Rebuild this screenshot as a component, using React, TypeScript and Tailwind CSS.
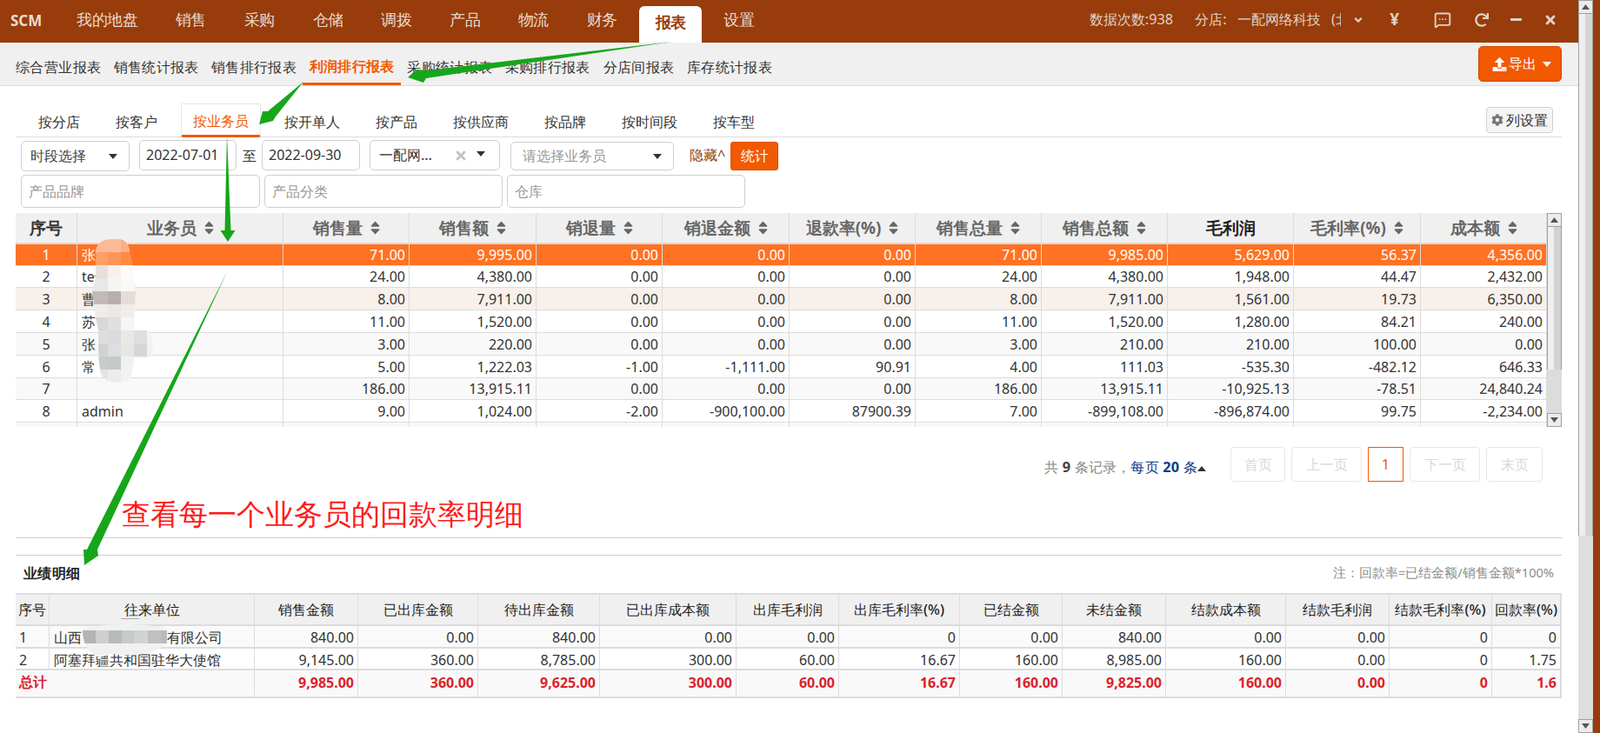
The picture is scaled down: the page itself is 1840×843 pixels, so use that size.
import React from "react";
import { FaAngleDown, FaCog, FaMinus, FaRedo, FaTimes, FaUpload } from "react-icons/fa";
import { MessageSquareMore } from "lucide-react";

const navItems = ["我的地盘", "销售", "采购", "仓储", "调拨", "产品", "物流", "财务", "报表", "设置"];
const subItems = ["综合营业报表", "销售统计报表", "销售排行报表", "利润排行报表", "采购统计报表", "采购排行报表", "分店间报表", "库存统计报表"];
const tabs = ["按分店", "按客户", "按业务员", "按开单人", "按产品", "按供应商", "按品牌", "按时间段", "按车型"];

const mainHead = ["销售量", "销售额", "销退量", "销退金额", "退款率(%)", "销售总量", "销售总额", "毛利润", "毛利率(%)", "成本额"];
const mainWidths = ["w-[145px]", "w-[146px]", "w-[145px]", "w-[146px]", "w-[145px]", "w-[145px]", "w-[145px]", "w-[145px]", "w-[146px]", "w-[145px]"];
const mainRows: { h: string; bg: string; name: string; v: string[] }[] = [
  { h: "h-[25px]", bg: "bg-[#ff7223] text-white", name: "张", v: ["71.00", "9,995.00", "0.00", "0.00", "0.00", "71.00", "9,985.00", "5,629.00", "56.37", "4,356.00"] },
  { h: "h-[25px]", bg: "bg-white", name: "test", v: ["24.00", "4,380.00", "0.00", "0.00", "0.00", "24.00", "4,380.00", "1,948.00", "44.47", "2,432.00"] },
  { h: "h-[26px]", bg: "bg-[#f7f0eb]", name: "曹", v: ["8.00", "7,911.00", "0.00", "0.00", "0.00", "8.00", "7,911.00", "1,561.00", "19.73", "6,350.00"] },
  { h: "h-[26px]", bg: "bg-white", name: "苏", v: ["11.00", "1,520.00", "0.00", "0.00", "0.00", "11.00", "1,520.00", "1,280.00", "84.21", "240.00"] },
  { h: "h-[26px]", bg: "bg-[#f9f9f9]", name: "张", v: ["3.00", "220.00", "0.00", "0.00", "0.00", "3.00", "210.00", "210.00", "100.00", "0.00"] },
  { h: "h-[26px]", bg: "bg-white", name: "常", v: ["5.00", "1,222.03", "-1.00", "-1,111.00", "90.91", "4.00", "111.03", "-535.30", "-482.12", "646.33"] },
  { h: "h-[25px]", bg: "bg-[#f9f9f9]", name: "", v: ["186.00", "13,915.11", "0.00", "0.00", "0.00", "186.00", "13,915.11", "-10,925.13", "-78.51", "24,840.24"] },
  { h: "h-[26px]", bg: "bg-white", name: "admin", v: ["9.00", "1,024.00", "-2.00", "-900,100.00", "87900.39", "7.00", "-899,108.00", "-896,874.00", "99.75", "-2,234.00"] },
  { h: "h-[26px]", bg: "bg-[#f9f9f9]", name: "", v: ["", "", "", "", "", "", "", "", "", ""] },
];

const subHead = ["销售金额", "已出库金额", "待出库金额", "已出库成本额", "出库毛利润", "出库毛利率(%)", "已结金额", "未结金额", "结款成本额", "结款毛利润", "结款毛利率(%)", "回款率(%)"];
const subWidths = ["w-[119px]", "w-[138px]", "w-[140px]", "w-[157px]", "w-[118px]", "w-[139px]", "w-[118px]", "w-[119px]", "w-[138px]", "w-[119px]", "w-[118px]", "w-[79px]"];
const subRow1 = ["840.00", "0.00", "840.00", "0.00", "0.00", "0", "0.00", "840.00", "0.00", "0.00", "0", "0"];
const subRow2 = ["9,145.00", "360.00", "8,785.00", "300.00", "60.00", "16.67", "160.00", "8,985.00", "160.00", "0.00", "0", "1.75"];
const subTotal = ["9,985.00", "360.00", "9,625.00", "300.00", "60.00", "16.67", "160.00", "9,825.00", "160.00", "0.00", "0", "1.6"];

const mosaicA: [number, number, number, string][] = [
  [110, 275, 14, "#fbb994"], [124, 275, 15, "#fcbb98"], [139, 275, 14, "#f9b087"],
  [106, 290, 18, "#fe9f66"], [124, 290, 15, "#ff9558"], [139, 290, 14, "#ff8b45"],
  [106, 305, 18, "#e8dedb"], [124, 305, 15, "#faf0eb"], [139, 305, 15, "#fdfbf9"],
  [106, 320, 18, "#e8e8e8"], [124, 320, 15, "#f7f5f3"], [139, 320, 15, "#f9f9f9"],
  [106, 335, 18, "#c2bab7"], [124, 335, 15, "#b5b0ae"], [139, 335, 17, "#e6dcd9"],
  [106, 350, 18, "#f1ecea"], [124, 350, 15, "#eae7e5"], [139, 350, 17, "#f2eded"],
  [106, 365, 18, "#d8d8d9"], [124, 365, 15, "#e0dfdf"], [139, 365, 17, "#f6f6f8"],
  [106, 380, 18, "#dedede"], [124, 380, 15, "#d9dcdf"], [139, 380, 15, "#e8e8e6"], [154, 380, 15, "#dddee0"], [169, 380, 8, "#f3f3f3"],
  [106, 395, 18, "#d0d2d3"], [124, 395, 15, "#dcdee0"], [139, 395, 15, "#e6e6e4"], [154, 395, 15, "#d5d6d8"], [169, 395, 8, "#f1f1f1"],
  [106, 410, 18, "#c8cbcb"], [124, 410, 15, "#c4c8c8"], [139, 410, 15, "#f0f1f3"], [154, 410, 15, "#f6f6f6"],
  [106, 425, 18, "#e4e4e4"], [124, 425, 15, "#ececec"], [139, 425, 15, "#f2f2f2"],
];
const mosaicB: [number, string][] = [
  [95, "#b3b3b3"], [110, "#cfcfcf"], [125, "#b9b9b9"], [140, "#c5caca"], [155, "#d2d2d2"], [170, "#c0c0c0"], [185, "#b9b9b9"],
];

const SortIcon = () => (
  <svg viewBox="0 0 11 16" className="h-[16px] w-[11px] shrink-0" fill="#666">
    <path d="M5.5 0.5 L10.2 5.6 Q10.6 6.6 9.6 6.8 L1.4 6.8 Q0.4 6.6 0.8 5.6 Z" />
    <path d="M5.5 15.5 L10.2 10.4 Q10.6 9.4 9.6 9.2 L1.4 9.2 Q0.4 9.4 0.8 10.4 Z" />
  </svg>
);

const Caret = ({ c = "#333" }: { c?: string }) => (
  <svg viewBox="0 0 10 6" className="h-[6px] w-[10px] shrink-0" fill={c}>
    <path d="M0 0 H10 L5 6 Z" />
  </svg>
);

const ScrollBtn = ({ up }: { up?: boolean }) => (
  <div className="flex h-[16px] w-full shrink-0 items-center justify-center border border-[#a0a0a0] bg-[#ececec]">
    <svg viewBox="0 0 9 6" className="h-[6px] w-[9px]" fill="#555">
      <path d={up ? "M4.5 0 L9 6 H0 Z" : "M0 0 H9 L4.5 6 Z"} />
    </svg>
  </div>
);

export default function App() {
  return (
    <div className="relative flex h-[843px] w-[1840px] overflow-hidden bg-white text-[16px] text-[#333] [font-family:'Liberation_Sans','Noto_Sans_CJK_SC',sans-serif]">
      <div className="flex w-[1815px] shrink-0 flex-col">
        {/* top bar */}
        <header className="flex h-[49px] shrink-0 items-end bg-[#973c0a] text-[#eadbd0]">
          <div className="flex h-[44px] w-[66px] items-center pb-[6px] pl-[12px] text-[17px] font-bold text-[#eadbd0]">SCM</div>
          <nav className="flex items-end pl-[0.3px]">
            {navItems.map((n) =>
              n === "报表" ? (
                <div key={n} className="mx-[3.5px] flex h-[42px] w-[72px] items-center justify-center rounded-t-[6px] bg-white pb-[6px] text-[17.5px] font-bold tracking-[-0.5px] text-[#973c0a]">
                  {n}
                </div>
              ) : (
                <div key={n} className="flex h-[42px] items-center px-[21.9px] pb-[12px] text-[17.5px] tracking-[-0.5px]">
                  {n}
                </div>
              )
            )}
          </nav>
          <div className="ml-auto flex h-full items-center pb-[4px]">
            <span className="text-[16.3px] text-[#dfd2c8]">数据次数:938</span>
            <span className="ml-[25px] w-[168px] overflow-hidden whitespace-nowrap text-[16.3px] text-[#dfd2c8] [word-spacing:8px]">
              分店: 一配网络科技 (北京)有限公司
            </span>
            <FaAngleDown className="ml-[13px] text-[14px] text-[#dfd2c8]" />
            <span className="ml-[29px] text-[19px] font-bold leading-none text-[#dfd2c8]">¥</span>
            <MessageSquareMore className="ml-[40px] h-[20px] w-[20px] text-[#dfd2c8]" strokeWidth={2.2} />
            <FaRedo className="ml-[27px] h-[16px] w-[16px] text-[#dfd2c8]" />
            <FaMinus className="ml-[24px] h-[15px] w-[15px] text-[#dfd2c8]" />
            <FaTimes className="ml-[25px] mr-[25px] h-[16px] w-[14px] text-[#dfd2c8]" />
          </div>
        </header>

        {/* sub menu */}
        <div className="relative flex h-[50px] shrink-0 items-center border-b border-[#dcdcdc] bg-[#f0f0f0] pl-[11px] pr-[19px]">
          {subItems.map((s) =>
            s === "利润排行报表" ? (
              <div key={s} className="flex h-[49px] w-[113px] items-center justify-center whitespace-nowrap border-b-[3px] border-[#f25900] pt-[8px] text-[16px] font-bold tracking-[0.35px] text-[#f25900]">
                {s}
              </div>
            ) : (
              <div key={s} className={`mt-[6px] whitespace-nowrap text-center text-[16px] tracking-[0.35px] text-[#333] ${s === "分店间报表" ? "w-[97px]" : "w-[112.4px]"}`}>
                {s}
              </div>
            )
          )}
          <button className="ml-auto flex h-[41px] w-[96px] items-center justify-center gap-[1px] rounded-[5px] border border-[#c94c03] bg-[#f25900] pl-[3px] text-[16.3px] text-white">
            <FaUpload className="mr-[1px] h-[16px] w-[17px]" />
            <span>导出</span>
            <span className="ml-[6px]"><Caret c="#fff" /></span>
          </button>
        </div>

        {/* tabs */}
        <div className="ml-[18px] mt-[20px] flex h-[39px] w-[1778px] shrink-0 items-end justify-between border-b border-[#dcdcdc] pl-[12px]">
          <div className="flex gap-[13px]">
            {tabs.map((t) =>
              t === "按业务员" ? (
                <div key={t} className="-mb-px flex h-[39px] items-center rounded-b-[3px] border border-b-[3px] border-[#e6e6e6] border-b-[#f25900] bg-white px-[13px] pt-[4px] text-[16.3px] text-[#f25900]">
                  {t}
                </div>
              ) : (
                <div key={t} className="flex h-[38px] items-center px-[14px] pt-[5px] text-[16.3px] text-[#333]">
                  {t}
                </div>
              )
            )}
          </div>
          <button className="mb-[4px] mr-[10px] flex h-[30px] w-[77px] items-center justify-center gap-[3px] rounded-[4px] border border-[#cfcfcf] bg-[#f5f5f5] text-[16.3px] text-[#333]">
            <FaCog className="h-[14px] w-[14px] text-[#777]" />
            列设置
          </button>
        </div>

        {/* filter rows */}
        <div className="ml-[24px] mt-[3px] flex h-[36px] shrink-0 items-start text-[16px]">
          <div className="mt-[1px] flex h-[35px] w-[125px] items-center justify-between rounded-[5px] border border-[#cfcfcf] pl-[10px] pr-[13px] text-[16.3px] text-[#444]">
            时段选择 <Caret />
          </div>
          <div className="ml-[11px] flex h-[35px] w-[112px] items-center rounded-[5px] border border-[#cfcfcf] pl-[7px] pb-[2px]">2022-07-01</div>
          <span className="ml-[7px] mt-[8px] w-[22px] text-[15.5px] leading-[20px]">至</span>
          <div className="flex h-[35px] w-[113px] items-center rounded-[5px] border border-[#cfcfcf] pl-[7px] pb-[2px]">2022-09-30</div>
          <div className="ml-[11px] flex h-[35px] w-[150px] items-center rounded-[5px] border border-[#cfcfcf] pl-[10px] text-[16.3px]">
            一配网…
            <FaTimes className="ml-[26px] h-[16px] w-[14px] text-[#c4c4c4]" />
            <span className="ml-[11px] mb-[4px]"><Caret /></span>
          </div>
          <div className="ml-[12px] mt-[2px] flex h-[33px] w-[188px] items-center justify-between rounded-[5px] border border-[#cfcfcf] pl-[13px] pr-[13px] text-[16.3px] text-[#999]">
            请选择业务员 <Caret />
          </div>
          <span className="ml-[18px] mt-[5px] whitespace-nowrap text-[16.3px] leading-[24px] text-[#8a3b10]">隐藏^</span>
          <button className="ml-[6px] mt-[2px] h-[33px] w-[55px] rounded-[3px] border border-[#d95203] bg-[#f25900] text-[16.3px] text-white">统计</button>
        </div>
        <div className="ml-[24px] mt-[4px] flex h-[38px] shrink-0 gap-[5px] text-[16.3px] text-[#999]">
          <div className="flex w-[275px] items-center rounded-[5px] border border-[#cfcfcf] pl-[8px]">产品品牌</div>
          <div className="flex w-[274px] items-center rounded-[5px] border border-[#cfcfcf] pl-[8px]">产品分类</div>
          <div className="flex w-[274px] items-center rounded-[5px] border border-[#cfcfcf] pl-[8px]">仓库</div>
        </div>

        {/* main table */}
        <div className="ml-[18px] mt-[6px] flex h-[246px] w-[1778px] shrink-0">
          <div className="h-full w-[1761px] overflow-hidden">
            <table className="w-[1761px] table-fixed border-separate border-spacing-0">
              <colgroup>
                <col className="w-[71px]" />
                <col className="w-[237px]" />
                {mainWidths.map((w, i) => (
                  <col key={i} className={w} />
                ))}
              </colgroup>
              <thead>
                <tr className="h-[36px] bg-[#f0f0f0] text-[18.8px] font-bold text-[#666]">
                  <th className="border-b-2 border-r border-[#dcdcdc] text-[#333]">序号</th>
                  <th className="border-b-2 border-r border-[#dcdcdc]">
                    <span className="flex items-center justify-center gap-[9px]">业务员 <SortIcon /></span>
                  </th>
                  {mainHead.map((h) => (
                    <th key={h} className={`border-b-2 border-r border-[#dcdcdc] ${h === "毛利润" ? "text-[#222]" : ""}`}>
                      {h === "毛利润" ? h : <span className="flex items-center justify-center gap-[9px] whitespace-nowrap">{h} <SortIcon /></span>}
                    </th>
                  ))}
                </tr>
              </thead>
              <tbody>
                {mainRows.map((r, i) => (
                  <tr key={i} className={`${r.h} ${r.bg}`}>
                    <td className="border-b border-r border-[#dcdcdc] text-center">{i < 8 ? i + 1 : ""}</td>
                    <td className="border-b border-r border-[#dcdcdc] pl-[5px]">{r.name}</td>
                    {r.v.map((v, j) => (
                      <td key={j} className="border-b border-r border-[#dcdcdc] pr-[4px] text-right">{v}</td>
                    ))}
                  </tr>
                ))}
              </tbody>
            </table>
          </div>
          <div className="flex h-full w-[17px] shrink-0 flex-col bg-[#dcdcdc]">
            <ScrollBtn up />
            <div className="h-[164px] w-full border-x border-[#a0a0a0] bg-[linear-gradient(90deg,#efefef_0%,#efefef_45%,#d2d2d2_45%,#d2d2d2_100%)]" />
            <div className="flex-1" />
            <ScrollBtn />
          </div>
        </div>

        {/* pagination */}
        <div className="mt-[23px] flex h-[40px] shrink-0 items-center justify-end pr-[41px] text-[16.3px]">
          <div className="mr-[28px] mt-[6px] flex items-center whitespace-nowrap text-[16.3px] tracking-[0.2px] text-[#888]">
            <span>共 <b className="text-[#444]">9</b> 条记录，</span>
            <span className="text-[#0d3a8a]">每页 <b>20</b> 条</span>
            <svg viewBox="0 0 10 6" className="mt-[3px] h-[6px] w-[10px]" fill="#333"><path d="M5 0 L10 6 H0 Z" /></svg>
          </div>
          <div className="flex gap-[7px] text-[#d8d8d8]">
            <div className="flex h-[40px] w-[63px] items-center justify-center rounded-[4px] border border-[#e6e6e6]">首页</div>
            <div className="flex h-[40px] w-[81px] items-center justify-center rounded-[4px] border border-[#e6e6e6]">上一页</div>
            <div className="flex h-[40px] w-[41px] items-center justify-center border border-[#f25900] text-[#f25900]">1</div>
            <div className="flex h-[40px] w-[81px] items-center justify-center rounded-[4px] border border-[#e6e6e6]">下一页</div>
            <div className="flex h-[40px] w-[65px] items-center justify-center rounded-[4px] border border-[#e6e6e6]">末页</div>
          </div>
        </div>

        {/* section dividers */}
        <div className="ml-[18px] mt-[64px] h-[20px] w-[1778px] shrink-0 border-t border-[#cccccc]" />
        <div className="ml-[18px] flex h-[44px] w-[1778px] shrink-0 items-center justify-between border-t border-[#cccccc] pb-[3px] pl-[9px] pr-[9px]">
          <span className="text-[16px] font-bold tracking-[0.3px] text-[#222]">业绩明细</span>
          <span className="text-[14.6px] text-[#8c8c8c]">注：回款率=已结金额/销售金额*100%</span>
        </div>

        {/* detail table */}
        <div className="ml-[18px] w-[1777px] shrink-0">
          <table className="w-[1777px] table-fixed border-separate border-spacing-0 border-r border-[#dcdcdc]">
            <colgroup>
              <col className="w-[39px]" />
              <col className="w-[236px]" />
              {subWidths.map((w, i) => (
                <col key={i} className={w} />
              ))}
            </colgroup>
            <thead>
              <tr className="h-[38px] bg-[#f0f0f0] text-[16.3px] text-[#1f1f1f]">
                <th className="whitespace-nowrap border-y-2 border-r border-[#dcdcdc] font-medium">序号</th>
                <th className="border-y-2 border-r border-[#dcdcdc] font-medium">
                  <span className="relative">
                    往来单位
                    <span className="absolute left-[-4px] top-[21px] h-[1px] w-[21px] bg-[#aaaaaa]" />
                  </span>
                </th>
                {subHead.map((h) => (
                  <th key={h} className="whitespace-nowrap border-y-2 border-r border-[#dcdcdc] font-medium">{h}</th>
                ))}
              </tr>
            </thead>
            <tbody className="leading-[20px]">
              <tr className="h-[26px] bg-[#fafafa]">
                <td className="border-b-2 border-r border-[#dcdcdc] pl-[4px] pt-[1px]">1</td>
                <td className="whitespace-nowrap border-b-2 border-r border-[#dcdcdc] pl-[5px] pt-[1px] text-[16.3px]">
                  山西<span className="inline-block w-[98px]" />有限公司
                </td>
                {subRow1.map((v, i) => (
                  <td key={i} className="border-b-2 border-r border-[#dcdcdc] pr-[4px] pt-[1px] text-right">{v}</td>
                ))}
              </tr>
              <tr className="h-[25px] bg-white">
                <td className="border-b-2 border-r border-[#dcdcdc] pl-[4px] pt-[3px]">2</td>
                <td className="whitespace-nowrap border-b-2 border-r border-[#dcdcdc] pl-[5px] pt-[3px] text-[16.3px]">阿塞拜疆共和国驻华大使馆</td>
                {subRow2.map((v, i) => (
                  <td key={i} className="border-b-2 border-r border-[#dcdcdc] pr-[4px] pt-[3px] text-right">{v}</td>
                ))}
              </tr>
              <tr className="h-[32px] bg-[#f9f9f9] font-bold text-[#d9232d]">
                <td colSpan={2} className="border-b-2 border-r border-[#dcdcdc] pb-[5px] pl-[4px] text-[16.3px]">总计</td>
                {subTotal.map((v, i) => (
                  <td key={i} className="border-b-2 border-r border-[#dcdcdc] pb-[3px] pr-[4px] text-right">{v}</td>
                ))}
              </tr>
            </tbody>
          </table>
        </div>
      </div>

      {/* page scrollbar */}
      <div className="flex h-full w-[17px] shrink-0 flex-col bg-[#dedede]">
        <ScrollBtn up />
        <div className="h-[600px] w-full border-x border-[#a0a0a0] bg-[linear-gradient(90deg,#efefef_0%,#efefef_48%,#d4d4d4_48%,#d4d4d4_100%)]" />
        <div className="flex-1" />
        <ScrollBtn />
      </div>
      <div className="h-full flex-1 bg-[#973c0a]" />

      {/* annotations drawn over the screenshot */}
      <svg className="pointer-events-none absolute left-0 top-0" width="1840" height="843" viewBox="0 0 1840 843">
        <defs>
          <clipPath id="blobA">
            <path d="M110 292 C110 280 118 275 128 275 L138 275 C146 276 149 284 149 292 L152 305 L156 335 L154 365 L155 380 L170 380 C177 385 177 405 172 411 L155 412 C152 420 152 430 150 435 C140 442 122 442 116 430 C113 415 113 400 113 380 L110 365 L108 350 L106 335 L110 320 Z" />
          </clipPath>
          <clipPath id="blobB">
            <path d="M95 724 C110 716 180 716 192 724 L192 740 C180 752 150 756 130 752 L114 756 C105 752 95 745 95 724 Z" />
          </clipPath>
        </defs>
        <g clipPath="url(#blobA)">
          <rect x="100" y="270" width="80" height="175" fill="#f6f4f2" />
          {mosaicA.map(([x, y, w, c], i) => (
            <rect key={i} x={x} y={y} width={w} height={15} fill={c} />
          ))}
        </g>
        <g clipPath="url(#blobB)">
          <rect x="90" y="712" width="110" height="50" fill="#f0f1f1" />
          {mosaicB.map(([x, c], i) => (
            <rect key={i} x={x} y={725} width={15} height={15} fill={c} />
          ))}
        </g>
        <g fill="#17a61b">
          <polygon points="773,48 492,81 479,80 469,89 487,95 490,90" />
          <polygon points="349,94 317,134 314,139 298,143 302,128 308,128" />
          <polygon points="261,155 258.5,265 253.5,265 262,278 270.5,265 265.5,265" />
          <polygon points="261,313 112,632 113,639 97,650 96,632 100,632" />
        </g>
      </svg>
      <div className="pointer-events-none absolute left-[140px] top-[571px] whitespace-nowrap text-[33px] leading-[40px] text-[#ff1a1a]">
        查看每一个业务员的回款率明细
      </div>
    </div>
  );
}
